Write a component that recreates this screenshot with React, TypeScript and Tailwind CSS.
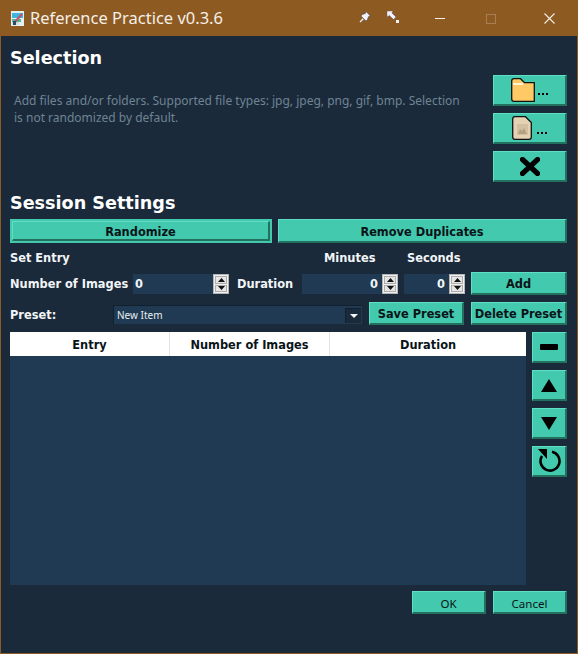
import React from "react";

const btn = "flex items-center justify-center bg-[#43c9ae] border-t border-l border-t-[#5fe0c5] border-l-[#5fe0c5] border-r-2 border-b-2 border-r-[#23705f] border-b-[#23705f] text-[#0a1418] font-bold text-[11.4px] [font-family:'DejaVu_Sans',sans-serif]";
const label = "text-[11.4px] font-bold text-[#f2f5f7] [font-family:'DejaVu_Sans',sans-serif] whitespace-nowrap";

function Spin({ className, value, align }: { className: string; value: string; align: string }) {
  return (
    <div className={"flex h-[20px] bg-[#1f3a52] " + className}>
      <div className={"flex-1 flex items-center pl-[2px] pr-[4px] pt-[2px] text-[11.4px] font-bold text-[#f2f5f7] [font-family:'DejaVu_Sans',sans-serif] " + align}>{value}</div>
      <div className="w-[16px] h-[20px] bg-[#f0f0f0] border border-[#b5b5b5] flex flex-col p-px gap-px">
        <div className="flex-1 bg-[#e6e6e6] border border-[#adadad] flex items-center justify-center">
          <svg width="7" height="4" viewBox="0 0 7 4"><path d="M3.5 0 L7 4 H0 Z" fill="#111" /></svg>
        </div>
        <div className="flex-1 bg-[#e6e6e6] border border-[#adadad] flex items-center justify-center">
          <svg width="7" height="4" viewBox="0 0 7 4"><path d="M0 0 H7 L3.5 4 Z" fill="#111" /></svg>
        </div>
      </div>
    </div>
  );
}

function Dots({ className }: { className: string }) {
  return <span className={"w-[10px] h-[2px] [background:repeating-linear-gradient(90deg,#000_0_2px,transparent_2px_4px)] " + className} />;
}

export default function App() {
  return (
    <div className="w-[578px] h-[654px] bg-[#1a2a3a] border-x border-b border-[#8d5a22] flex flex-col overflow-hidden [font-family:'Noto_Sans',sans-serif]">
      <div className="h-[36px] -mx-px shrink-0 bg-[#8d5a22] flex items-center text-[#f4efe8]">
        <svg className="ml-[11px]" width="13" height="15" viewBox="0 0 13 15">
          <rect x="0" y="0" width="13" height="15" fill="#e6eef0" />
          <rect x="1" y="2" width="11" height="5" fill="#3fb4de" />
          <rect x="1" y="8" width="9" height="3" fill="#4fb79a" />
          <rect x="1" y="11" width="7" height="3" fill="#cfe5dc" />
          <path d="M4 11 L11 3" stroke="#c8506a" strokeWidth="2" />
          <rect x="2" y="10" width="3" height="4" fill="#2d4a66" />
        </svg>
        <span className="ml-[6px] text-[16.5px] leading-none">Reference Practice v0.3.6</span>
        <div className="ml-auto flex items-center h-full">
          <svg width="12" height="12" viewBox="0 0 12 12" className="mr-[16px] -mt-[3px]">
            <path d="M4.5 7.5 L1 11" stroke="#f2f2fa" strokeWidth="1.2" />
            <path d="M7 .6 L11.4 5 L9.6 5.6 L8.4 8.6 L7 10 L2 5 L3.4 3.6 L6.4 2.4 Z" fill="#f2f2fa" stroke="#39395a" strokeWidth="0.5" />
          </svg>
          <svg width="12" height="12" viewBox="0 0 12 12" className="mr-[36px] -mt-[3px]">
            <path d="M0 0 H6 L5 2 L9 6 L6.5 8.5 L2.4 4.6 L0 6 Z" fill="#f2f2fa" stroke="#39395a" strokeWidth="0.4" />
            <rect x="9" y="9" width="3" height="3" fill="#f2f2fa" />
          </svg>
          <div className="w-[10px] h-px bg-[#f4efe8] mr-[41px] mt-px" />
          <div className="w-[10px] h-[10px] border border-[#a87f52] mr-[48px] mt-px" />
          <svg width="11" height="11" viewBox="0 0 11 11" className="mr-[23px] mt-px">
            <path d="M.5 .5 L10.5 10.5 M10.5 .5 L.5 10.5" stroke="#f4efe8" strokeWidth="1.1" />
          </svg>
        </div>
      </div>

      <div className="flex-1 flex flex-col pl-[9px] pr-[10px]">
        <div className="flex">
          <div className="flex-1 min-w-0">
            <h1 className="text-[17.6px] leading-[28px] mt-[8px] font-bold text-white [font-family:'DejaVu_Sans',sans-serif]">Selection</h1>
            <p className="mt-[20px] ml-[4px] text-[12px] leading-[17px] text-[#6f8494]">
              Add files and/or folders. Supported file types: jpg, jpeg, png, gif, bmp. Selection<br />is not randomized by default.
            </p>
          </div>
          <div className="w-[74px] flex flex-col gap-[7px] mt-[39px]">
            <button className={btn + " h-[31px]"}>
              <svg width="24" height="24" viewBox="0 0 24 24" className="mr-[3px]">
                <path d="M.7 3 Q.7 .7 3 .7 H9.5 L13.5 4.7 H23.3 V23.3 H3 Q.7 23.3 .7 21 Z" fill="#ffc966" stroke="#111" strokeWidth="1.3" />
                <rect x="2" y="5" width="10" height="2" fill="#fff3d6" />
              </svg>
              <Dots className="mt-[8px]" />
            </button>
            <button className={btn + " h-[31px]"}>
              <svg width="20" height="24" viewBox="0 0 20 24" className="mr-[5px]">
                <path d="M3 .7 H13.5 L19.3 6.5 V21 Q19.3 23.3 17 23.3 H3 Q.7 23.3 .7 21 V3 Q.7 .7 3 .7 Z" fill="#e4d2b2" stroke="#111" strokeWidth="1.3" />
                <rect x="5" y="8" width="11" height="11" fill="#d2c0a0" />
                <path d="M6 18 L8 13 L10 15 L12 12 L15 18 Z" fill="#b3a080" />
              </svg>
              <Dots className="mt-[9px]" />
            </button>
            <button className={btn + " h-[31px]"}>
              <svg width="20" height="19" viewBox="0 0 20 19">
                <path d="M2.5 2.5 L17.5 16.5 M17.5 2.5 L2.5 16.5" stroke="#000" strokeWidth="5.2" strokeLinecap="square" />
              </svg>
            </button>
          </div>
        </div>

        <h2 className="text-[17.6px] leading-[28px] mt-[6px] pt-[1px] h-[28px] font-bold text-white [font-family:'DejaVu_Sans',sans-serif]">Session Settings</h2>

        <div className="flex gap-[6px] mt-[3px]">
          <div className="w-[262px] h-[24px] border-2 border-[#43c9ae] flex">
            <button className={btn + " flex-1 pt-[5px]"}>Randomize</button>
          </div>
          <button className={btn + " flex-1 h-[24px] pt-[4px]"}>Remove Duplicates</button>
        </div>

        <div className="flex h-[20px] mt-[5px] items-center pt-[2px]">
          <span className={label + " w-[314px]"}>Set Entry</span>
          <span className={label + " w-[83px]"}>Minutes</span>
          <span className={label}>Seconds</span>
        </div>

        <div className="flex items-center h-[24px] mt-[4px]">
          <span className={label + " w-[123px] pt-[2px]"}>Number of Images</span>
          <Spin className="w-[96px]" value="0" align="justify-start" />
          <span className={label + " ml-[8px] w-[65px] pt-[2px]"}>Duration</span>
          <Spin className="w-[96px]" value="0" align="justify-end" />
          <Spin className="w-[61px] ml-[6px]" value="0" align="justify-end" />
          <button className={btn + " w-[96px] h-[23px] self-start ml-[6px] pt-[3px]"}>Add</button>
        </div>

        <div className="flex items-center h-[24px] mt-[6px]">
          <span className={label + " w-[103px] pt-[4px]"}>Preset:</span>
          <div className="w-[249px] h-[19px] mt-[1px] bg-[#1f3a52] border-t border-l border-[#10202e] flex items-center">
            <span className="flex-1 pl-[3px] text-[10px] text-[#e8edf0]">New Item</span>
            <div className="w-[16px] h-[15px] mr-[1px] bg-[#1a2a3a] border-t border-l border-[#10202e] flex items-center justify-center">
              <svg width="8" height="4" viewBox="0 0 8 4"><path d="M0 0 H8 L4 4 Z" fill="#f2f5f7" /></svg>
            </div>
          </div>
          <button className={btn + " w-[95px] h-[23px] self-start ml-[7px] pt-[3px]"}>Save Preset</button>
          <button className={btn + " w-[96px] h-[23px] self-start ml-[7px] pt-[3px] whitespace-nowrap"}>Delete Preset</button>
        </div>

        <div className="flex mt-[6px] gap-[6px]">
          <div className="w-[516px] h-[253px] bg-[#1f3a52] flex flex-col">
            <div className="h-[24px] bg-white flex text-[11.4px] font-bold text-[#0a1418] [font-family:'DejaVu_Sans',sans-serif]">
              <div className="w-[160px] border-r border-[#e4e4e4] flex items-center justify-center pt-[3px]">Entry</div>
              <div className="w-[160px] border-r border-[#e4e4e4] flex items-center justify-center pt-[3px]">Number of Images</div>
              <div className="flex-1 flex items-center justify-center pt-[3px]">Duration</div>
            </div>
          </div>
          <div className="flex-1 flex flex-col gap-[7px]">
            <button className={btn + " h-[31px]"}>
              <div className="w-[18px] h-[6px] bg-black rounded-[1px]" />
            </button>
            <button className={btn + " h-[31px]"}>
              <svg width="16" height="13" viewBox="0 0 16 13"><path d="M8 0 L16 13 H0 Z" fill="#000" /></svg>
            </button>
            <button className={btn + " h-[31px]"}>
              <svg width="16" height="13" viewBox="0 0 16 13"><path d="M0 0 H16 L8 13 Z" fill="#000" /></svg>
            </button>
            <button className={btn + " h-[31px]"}>
              <svg width="24" height="24" viewBox="0 0 24 24">
                <path d="M15 2.8 A9.5 9.5 0 1 1 5 7" fill="none" stroke="#000" strokeWidth="2.6" />
                <path d="M1 0 H10 V10 Z" fill="#000" />
              </svg>
            </button>
          </div>
        </div>

        <div className="flex justify-end gap-[7px] mt-[6px]">
          <button className={btn + " w-[74px] h-[23px] pt-[3px] !font-normal !text-[11.5px] [font-family:'Noto_Sans',sans-serif]"}>OK</button>
          <button className={btn + " w-[74px] h-[23px] pt-[3px] !font-normal !text-[11.5px] [font-family:'Noto_Sans',sans-serif]"}>Cancel</button>
        </div>
      </div>
    </div>
  );
}
